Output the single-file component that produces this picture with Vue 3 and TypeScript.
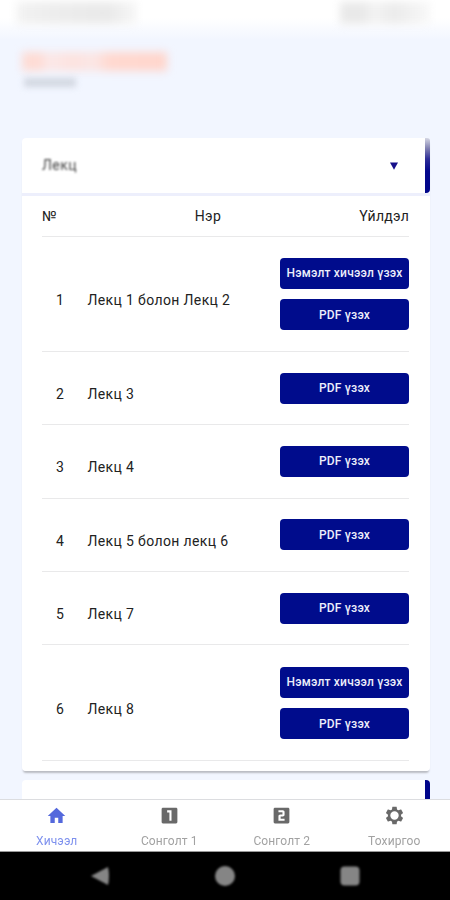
<script setup lang="ts">
interface Lesson {
  id: number
  name: string
  extra: boolean
}

interface Tab {
  label: string
  icon: string
  active?: boolean
}

const lessons: Lesson[] = [
  { id: 1, name: 'Лекц 1 болон Лекц 2', extra: true },
  { id: 2, name: 'Лекц 3', extra: false },
  { id: 3, name: 'Лекц 4', extra: false },
  { id: 4, name: 'Лекц 5 болон лекц 6', extra: false },
  { id: 5, name: 'Лекц 7', extra: false },
  { id: 6, name: 'Лекц 8', extra: true },
]

const tabs: Tab[] = [
  { label: 'Хичээл', icon: 'M10 20.5v-6h4v6h5v-8h3L12 3 2 12.5h3v8z', active: true },
  {
    label: 'Сонголт 1',
    icon: 'M19.5 3h-15C3.700 3 3 3.700 3 4.500v15c0 .8.7 1.500 1.500 1.500h15c.8 0 1.500-.7 1.500-1.500v-15c0-.8-.7-1.500-1.500-1.500zM14.300 18h-2.400V8.500H9.300V6h5z',
  },
  {
    label: 'Сонголт 2',
    icon: 'M19.500 3h-15C3.700 3 3 3.700 3 4.500v15c0 .8.7 1.500 1.500 1.500h15c.8 0 1.500-.7 1.500-1.500v-15c0-.8-.7-1.500-1.500-1.500zM15.500 11c0 1.110-.9 2-2 2h-2.500v2.700h4.500V18h-7v-5.200c0-1.110.9-2 2-2h2.600V8.300H8.500V6h5c1.100 0 2 .89 2 2z',
  },
  {
    label: 'Тохиргоо',
    icon: 'M19.43 12.98c.04-.32.07-.64.07-.98s-.03-.66-.07-.98l2.11-1.65c.19-.15.24-.42.12-.64l-2-3.46c-.12-.22-.39-.3-.61-.22l-2.49 1c-.52-.4-1.08-.73-1.69-.98l-.38-2.65C14.46 2.18 14.25 2 14 2h-4c-.25 0-.46.18-.49.42l-.38 2.65c-.61.25-1.17.59-1.69.98l-2.49-1c-.23-.09-.49 0-.61.22l-2 3.46c-.13.22-.07.49.12.64l2.11 1.65c-.04.32-.07.65-.07.98s.03.66.07.98l-2.11 1.65c-.19.15-.24.42-.12.64l2 3.46c.12.22.39.3.61.22l2.49-1c.52.4 1.08.73 1.69.98l.38 2.65c.03.24.24.42.49.42h4c.25 0 .46-.18.49-.42l.38-2.65c.61-.25 1.17-.59 1.69-.98l2.49 1c.23.09.49 0 .61-.22l2-3.46c.12-.22.07-.49-.12-.64l-2.11-1.65zM12 16.8a4.8 4.8 0 1 1 0-9.6a4.8 4.8 0 1 1 0 9.600z',
  },
]
</script>

<template>
  <div class="screen">
    <div class="status">
      <span class="smudge clock"></span>
      <span class="smudge signal"></span>
    </div>
    <header class="profile">
      <div class="smudge name"></div>
      <div class="smudge role"></div>
    </header>

    <main class="content">
      <section class="panel">
        <div class="panel-head">
          <span class="panel-title">Лекц</span>
          <svg class="caret" viewBox="0 0 8 8"><path d="M0 0.4h8L4 7.8z" /></svg>
          <span class="strip"></span>
        </div>
        <div class="table">
          <div class="thead">
            <span>№</span>
            <span>Нэр</span>
            <span>Үйлдэл</span>
          </div>
          <div v-for="l in lessons" :key="l.id" class="row" :class="{ tall: l.extra }">
            <span class="num">{{ l.id }}</span>
            <span class="title">{{ l.name }}</span>
            <div class="actions">
              <button v-if="l.extra" class="btn">Нэмэлт хичээл үзэх</button>
              <button class="btn">PDF үзэх</button>
            </div>
          </div>
        </div>
      </section>
      <section class="next-panel"><span class="next-strip"></span></section>
    </main>

    <nav class="tabs">
      <div v-for="t in tabs" :key="t.label" class="tab" :class="{ active: t.active }">
        <svg class="tab-icon" viewBox="0 0 24 24"><path :d="t.icon" fill-rule="evenodd" /></svg>
        <span class="tab-label">{{ t.label }}</span>
      </div>
    </nav>
    <div class="sysbar">
      <svg viewBox="0 0 24 24"><path d="M3 12 L20 3 Q22 12 20 21 Z" /></svg>
      <svg viewBox="0 0 24 24"><circle cx="12" cy="12" r="10" /></svg>
      <svg viewBox="0 0 24 24"><rect x="2.500" y="2.500" width="19" height="19" rx="4" /></svg>
    </div>
  </div>
</template>

<style>
body {
  margin: 0;
  background: #f2f6ff;
}
</style>

<style scoped>
.screen {
  width: 450px;
  height: 900px;
  overflow: hidden;
  display: flex;
  flex-direction: column;
  background: linear-gradient(#fff 0, #fff 18px, #f2f6ff 40px);
  font-family: Roboto, 'Liberation Sans', sans-serif;
  color: #222;
}
.status {
  height: 26px;
  flex: none;
  display: flex;
  justify-content: space-between;
  padding: 2px 20px 0 17px;
  box-sizing: border-box;
}
.smudge {
  filter: blur(4px);
}
.clock {
  width: 120px;
  height: 22px;
  background: linear-gradient(90deg, #f2f2f2, #ededed 30%, #e9e9e9 75%, #f7f7f7);
}
.signal {
  width: 90px;
  height: 22px;
  background: linear-gradient(90deg, #e9e9e9 25%, #f3f3f3 38%, #ebebeb 60%, #f8f8f8);
}
.profile {
  height: 112px;
  flex: none;
  padding: 26px 22px 0;
  box-sizing: border-box;
}
.name {
  width: 145px;
  height: 19px;
  background: linear-gradient(90deg, #fedcd5, #fedbd4 12%, #fbe8e8 18%, #fce2df 35%, #fbe6e5 50%, #ffd8cf 60%, #ffd5cc);
}
.role {
  width: 52px;
  height: 9px;
  margin: 7px 0 0 2px;
  background: #d2d7e1;
  filter: blur(3px);
}
.content {
  flex: 1;
  min-height: 0;
  overflow: hidden;
  padding: 0 20px 0 22px;
  display: flex;
  flex-direction: column;
  gap: 9px;
}
.panel {
  flex: none;
  height: 633px;
  display: flex;
  flex-direction: column;
  gap: 3px;
  border-radius: 4px;
  background: #edeffc;
  box-shadow: 0 3px 2px -1px #b9bbc2;
}
.panel-head {
  height: 55px;
  flex: none;
  display: flex;
  align-items: center;
  background: #fff;
  border-radius: 4px 4px 0 0;
}
.panel-title {
  flex: 1;
  padding: 0 0 2px 20px;
  font-size: 14px;
  letter-spacing: 0.45px;
  color: #444;
  filter: blur(0.8px);
}
.caret {
  width: 8px;
  height: 8px;
  margin-right: 27px;
  fill: #17108a;
}
.strip {
  width: 5.500px;
  height: 100%;
  border-radius: 0 3px 4px 0;
  background: linear-gradient(#d5d7e4, #8585b4 18%, #2e2e98 38%, #04088c 60%, #00058a);
  filter: blur(0.4px);
}
.table {
  flex: 1;
  padding: 0 21px 0 20px;
  background: #fff;
  border-radius: 0 0 4px 4px;
}
.thead {
  height: 41px;
  box-sizing: border-box;
  border-bottom: 1px solid #e9e9ea;
  display: flex;
  align-items: center;
  justify-content: space-between;
  font-size: 14px;
  letter-spacing: 0.25px;
}
.row {
  height: 73.4px;
  box-sizing: border-box;
  border-bottom: 1px solid #e9e9ea;
  display: flex;
  align-items: center;
  font-size: 14px;
  letter-spacing: 0.37px;
}
.row.tall {
  height: 114.9px;
}
.row:last-child {
  height: 116px;
}
.num {
  width: 36px;
  text-align: center;
  padding: 12px 0 0;
}
.title {
  flex: 1;
  padding: 12px 0 0 9.500px;
  white-space: nowrap;
}
.actions {
  width: 129px;
  display: flex;
  flex-direction: column;
  gap: 10.5px;
}
.btn {
  height: 31px;
  padding: 0;
  border: 0;
  border-radius: 4px;
  background: #000c8c;
  color: #eceefb;
  font: 500 12px Roboto, 'Liberation Sans', sans-serif;
  letter-spacing: 0.2px;
  white-space: nowrap;
}
.next-panel {
  flex: none;
  height: 40px;
  display: flex;
  justify-content: flex-end;
  background: #fff;
  border-radius: 4px;
  overflow: hidden;
}
.next-strip {
  width: 5.500px;
  background: #00058a;
}
.tabs {
  flex: none;
  height: 53px;
  box-sizing: border-box;
  display: grid;
  grid-template-columns: repeat(4, 1fr);
  background: #fff;
  border-top: 1px solid #dcdde0;
  border-bottom: 1px solid #999;
}
.tab {
  display: flex;
  flex-direction: column;
  align-items: center;
  padding-top: 5px;
  padding-left: 1px;
  color: #a2a2a2;
}
.tab-icon {
  width: 21px;
  height: 21px;
  fill: #696969;
}
.tab-label {
  margin-top: 8px;
  font-size: 12px;
  line-height: 14px;
  letter-spacing: 0.1px;
  filter: blur(0.6px);
}
.tab.active {
  color: #7e91ee;
}
.tab.active .tab-icon {
  fill: #5468dc;
}
.sysbar {
  flex: none;
  height: 48px;
  display: flex;
  justify-content: center;
  align-items: center;
  gap: 101px;
  background: #000;
}
.sysbar svg {
  width: 24px;
  height: 24px;
  fill: #858585;
  filter: blur(1.3px);
}
</style>
